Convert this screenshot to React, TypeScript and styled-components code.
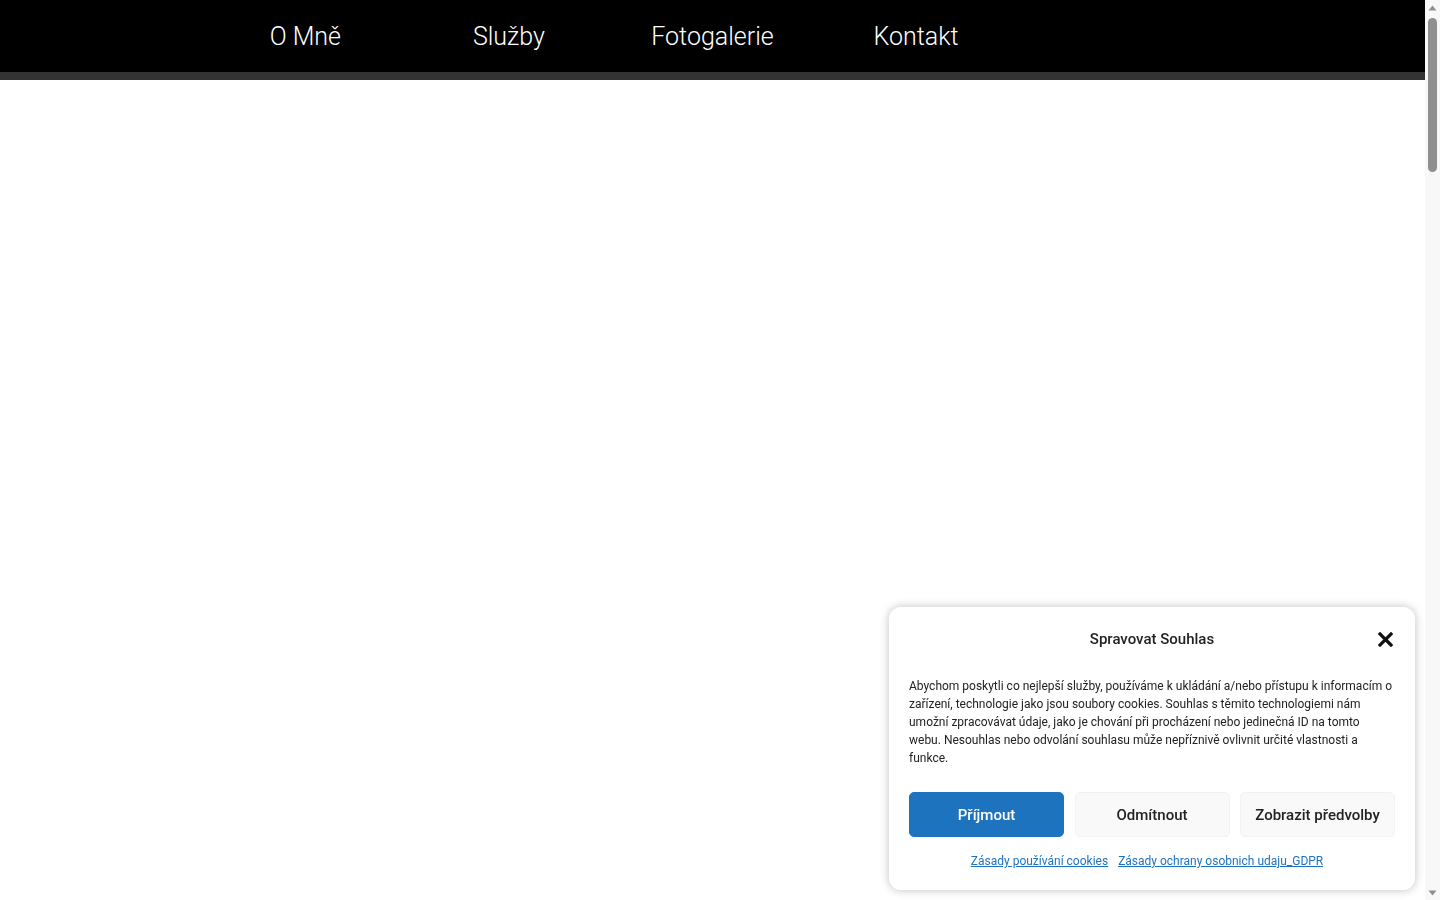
import React from 'react';
import styled, { createGlobalStyle } from 'styled-components';

const GlobalStyle = createGlobalStyle`
  html, body {
    margin: 0;
    padding: 0;
    background: #ffffff;
    font-family: Roboto, "Liberation Sans", Arial, sans-serif;
  }
`;

const Page = styled.div`
  min-height: 5200px;
  margin-right: 15px;
  background: #ffffff;
`;

// mimic of the browser's classic scrollbar seen in the screenshot
const ScrollRail = styled.div`
  position: fixed;
  top: 0;
  right: 0;
  bottom: 0;
  width: 15px;
  background: #f8f8f8;
  display: flex;
  flex-direction: column;
  align-items: center;
`;

const ScrollArrow = styled.div`
  height: 15px;
  display: flex;
  align-items: center;
  justify-content: center;
`;

const ScrollThumb = styled.div`
  margin-top: 3px;
  width: 9px;
  height: 154px;
  border-radius: 5px;
  background: #8f8f8f;
`;

const ScrollSpacer = styled.div`
  flex: 1;
`;

const Header = styled.header`
  background-color: #000000;
  border-bottom: 8px solid #333333;
`;

const Nav = styled.nav`
  max-width: 1018px;
  height: 72px;
  margin: 0 auto;
  display: grid;
  grid-template-columns: repeat(5, 1fr);
  align-items: center;
`;

const NavLink = styled.a`
  color: #ffffff;
  font-size: 25px;
  font-weight: 300;
  text-align: center;
  text-decoration: none;
`;

const Banner = styled.div`
  position: fixed;
  right: 25px;
  bottom: 10px;
  width: 526px;
  box-sizing: border-box;
  padding: 20px 22px 21px 20px;
  background: #ffffff;
  border-radius: 12px;
  box-shadow: 0 0 10px rgba(0, 0, 0, 0.25);
  display: flex;
  flex-direction: column;
  color: #222222;
`;

const BannerHead = styled.div`
  position: relative;
  height: 24px;
  display: flex;
  align-items: center;
  justify-content: center;
`;

const Title = styled.div`
  font-size: 15px;
  font-weight: 500;
  margin-left: 2px;
`;

const Close = styled.button`
  position: absolute;
  right: -2px;
  top: 2px;
  border: none;
  background: none;
  padding: 0;
  width: 20px;
  height: 20px;
  display: flex;
  align-items: center;
  justify-content: center;
  cursor: pointer;
`;

const Message = styled.p`
  margin: 26px 0 0;
  font-size: 12px;
  line-height: 18px;
  color: #222222;
`;

const Buttons = styled.div`
  margin-top: 25px;
  display: grid;
  grid-template-columns: repeat(3, 155px);
  justify-content: space-between;
  width: 486px;
`;

const Btn = styled.button<{ $primary?: boolean }>`
  height: 45px;
  border-radius: 5px;
  font-family: Roboto, "Liberation Sans", Arial, sans-serif;
  font-size: 15px;
  font-weight: 500;
  cursor: pointer;
  background: ${(p) => (p.$primary ? '#1e73be' : '#f9f9f9')};
  color: ${(p) => (p.$primary ? '#ffffff' : '#222222')};
  border: 1px solid ${(p) => (p.$primary ? '#1e73be' : '#f2f2f2')};
`;

const Links = styled.div`
  margin-top: 16px;
  display: flex;
  justify-content: center;
  gap: 10px;
  line-height: 16px;
  width: 476px;
`;

const DocLink = styled.a`
  font-size: 12px;
  color: #1e73be;
  text-decoration: underline;
`;

const App: React.FC = () => {
  return (
    <>
      <GlobalStyle />
      <Page>
        <Header>
          <Nav>
            <NavLink href="#">O Mně</NavLink>
            <NavLink href="#">Služby</NavLink>
            <NavLink href="#">Fotogalerie</NavLink>
            <NavLink href="#">Kontakt</NavLink>
          </Nav>
        </Header>
      </Page>
      <ScrollRail>
        <ScrollArrow>
          <svg width="9" height="6" viewBox="0 0 9 6">
            <path d="M4.5 0.5 L8.5 5.5 L0.5 5.5 Z" fill="#8f8f8f" />
          </svg>
        </ScrollArrow>
        <ScrollThumb />
        <ScrollSpacer />
        <ScrollArrow>
          <svg width="9" height="6" viewBox="0 0 9 6">
            <path d="M0.5 0.5 L8.5 0.5 L4.5 5.5 Z" fill="#8f8f8f" />
          </svg>
        </ScrollArrow>
      </ScrollRail>
      <Banner>
        <BannerHead>
          <Title>Spravovat Souhlas</Title>
          <Close aria-label="Zavřít">
            <svg width="15" height="15" viewBox="0 0 15 15">
              <path d="M2 2 L13 13 M13 2 L2 13" stroke="#111" strokeWidth="3.2" strokeLinecap="square" />
            </svg>
          </Close>
        </BannerHead>
        <Message>
          Abychom poskytli co nejlepší služby, používáme k ukládání a/nebo přístupu k informacím o
          zařízení, technologie jako jsou soubory cookies. Souhlas s těmito technologiemi nám
          umožní zpracovávat údaje, jako je chování při procházení nebo jedinečná ID na tomto
          webu. Nesouhlas nebo odvolání souhlasu může nepříznivě ovlivnit určité vlastnosti a
          funkce.
        </Message>
        <Buttons>
          <Btn $primary>Příjmout</Btn>
          <Btn>Odmítnout</Btn>
          <Btn>Zobrazit předvolby</Btn>
        </Buttons>
        <Links>
          <DocLink href="#">Zásady používání cookies</DocLink>
          <DocLink href="#">Zásady ochrany osobnich udaju_GDPR</DocLink>
        </Links>
      </Banner>
    </>
  );
};

export default App;
